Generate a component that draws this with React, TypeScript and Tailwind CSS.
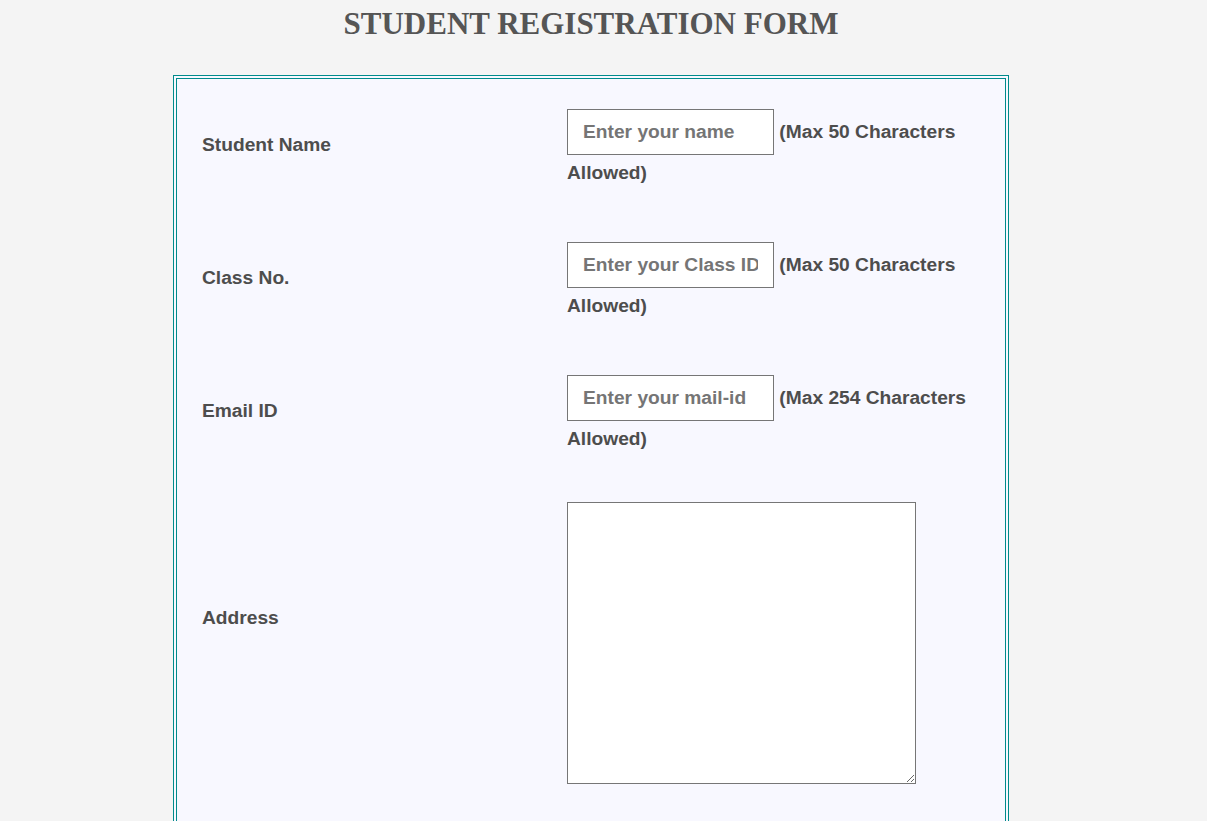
import React, { useState } from 'react';

type Field = {
  label: string;
  name: string;
  placeholder: string;
  limit: number;
};

const FIELDS: Field[] = [
  { label: 'Student Name', name: 'name', placeholder: 'Enter your name', limit: 50 },
  { label: 'Class No.', name: 'classId', placeholder: 'Enter your Class ID', limit: 50 },
  { label: 'Email ID', name: 'email', placeholder: 'Enter your mail-id', limit: 254 },
];

const App: React.FC = () => {
  const [values, setValues] = useState<Record<string, string>>({});
  const [address, setAddress] = useState('');
  const [gender, setGender] = useState('');

  const update = (name: string, value: string) => {
    setValues(prev => ({ ...prev, [name]: value }));
  };

  return (
    <div className="h-[821px] w-[1207px] overflow-scroll bg-[#f4f4f4] [&::-webkit-scrollbar]:h-[17px] [&::-webkit-scrollbar]:w-[17px] [&::-webkit-scrollbar-track]:bg-[#f1f1f1] [&::-webkit-scrollbar-thumb]:bg-[#c1c1c1] [&::-webkit-scrollbar-corner]:bg-[#dcdcdc]">
      <div className="w-[1222px] min-h-[1970px]">
        <div className="w-[1182px] pt-[8px] pb-[40px]">
          <h1 className="text-center text-[31px] leading-none font-bold text-[#555] font-['Liberation_Serif','Times_New_Roman',serif]">
            STUDENT REGISTRATION FORM
          </h1>

          <form
            onSubmit={e => e.preventDefault()}
            className="mx-auto mt-[36px] w-[836px] border-4 border-double border-[#008b8b] bg-[#f8f8ff] pt-[1px] pb-[30px] text-[19.2px] font-bold leading-[22px] text-[#4d4d4d] font-['Liberation_Sans',Arial,sans-serif]"
          >
            {FIELDS.map(field => (
              <div key={field.name} className="grid grid-cols-[390px_1fr] items-center py-[29px]">
                <label className="pl-[25px] translate-y-[-2px]">{field.label}</label>
                <div className="pr-[25px]">
                  <input
                    type="text"
                    maxLength={field.limit}
                    value={values[field.name] ?? ''}
                    onChange={e => update(field.name, e.target.value)}
                    placeholder={field.placeholder}
                    className="mb-[7px] inline-block h-[46px] w-[207px] border border-[#767676] bg-white px-[15px] py-[11px] align-baseline font-bold leading-[22px] text-[#333] placeholder:text-[#757575]"
                  />{' '}
                  (Max {field.limit} Characters Allowed)
                </div>
              </div>
            ))}

            <div className="grid grid-cols-[390px_1fr] items-start pt-[23px] pb-[29px]">
              <label className="pl-[25px] pt-[105px]">Address</label>
              <div className="pr-[25px]">
                <textarea
                  value={address}
                  onChange={e => setAddress(e.target.value)}
                  className="block h-[282px] w-[349px] border border-[#767676] bg-white p-[4px] text-[16px]"
                />
              </div>
            </div>

            <div className="grid grid-cols-[390px_1fr] items-center py-[29px]">
              <label className="pl-[25px]">Gender</label>
              <div className="flex gap-6 pr-[25px]">
                {['Male', 'Female', 'Other'].map(g => (
                  <label key={g} className="flex items-center gap-2">
                    <input
                      type="radio"
                      name="gender"
                      checked={gender === g}
                      onChange={() => setGender(g)}
                    />
                    {g}
                  </label>
                ))}
              </div>
            </div>

            <div className="grid grid-cols-[390px_1fr] items-center py-[29px]">
              <label className="pl-[25px]">Date of Birth</label>
              <div className="pr-[25px]">
                <input
                  type="text"
                  placeholder="DD/MM/YYYY"
                  className="h-[46px] w-[207px] border border-[#767676] bg-white px-[15px] py-[11px] font-bold placeholder:text-[#757575]"
                />
              </div>
            </div>

            <div className="grid grid-cols-[390px_1fr] items-center py-[29px]">
              <label className="pl-[25px]">Mobile No.</label>
              <div className="pr-[25px]">
                <input
                  type="text"
                  placeholder="Enter your number"
                  className="h-[46px] w-[207px] border border-[#767676] bg-white px-[15px] py-[11px] font-bold placeholder:text-[#757575]"
                />
              </div>
            </div>

            <div className="grid grid-cols-[390px_1fr] items-center py-[29px]">
              <label className="pl-[25px]">Course</label>
              <div className="pr-[25px]">
                <select className="h-[46px] w-[207px] border border-[#767676] bg-white px-[15px] font-bold">
                  <option>Select course</option>
                  <option>Science</option>
                  <option>Commerce</option>
                  <option>Arts</option>
                </select>
              </div>
            </div>

            <div className="flex justify-center gap-6 py-[29px]">
              <button type="submit" className="border border-[#008b8b] bg-[#008b8b] px-8 py-3 text-white">
                Submit
              </button>
              <button type="reset" className="border border-[#767676] bg-white px-8 py-3">
                Reset
              </button>
            </div>
          </form>
        </div>
      </div>
    </div>
  );
};

export default App;
